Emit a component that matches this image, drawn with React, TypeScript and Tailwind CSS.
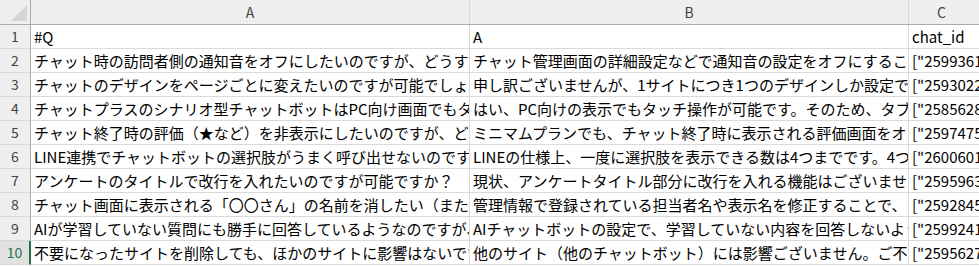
import React from "react";

const rows = [
    ["#Q", "A", "chat_id"],
    ["チャット時の訪問者側の通知音をオフにしたいのですが、どうすればよいですか？", "チャット管理画面の詳細設定などで通知音の設定をオフにすることで対応可能です。", "[\"2599361\"]"],
    ["チャットのデザインをページごとに変えたいのですが可能でしょうか？", "申し訳ございませんが、1サイトにつき1つのデザインしか設定できません。", "[\"2593022\"]"],
    ["チャットプラスのシナリオ型チャットボットはPC向け画面でもタッチ操作できますか？", "はい、PC向けの表示でもタッチ操作が可能です。そのため、タブレットでもご利用いただけます。", "[\"2585628\"]"],
    ["チャット終了時の評価（★など）を非表示にしたいのですが、どうすればよいですか？", "ミニマムプランでも、チャット終了時に表示される評価画面をオフにできます。", "[\"2597475\"]"],
    ["LINE連携でチャットボットの選択肢がうまく呼び出せないのですが", "LINEの仕様上、一度に選択肢を表示できる数は4つまでです。4つ以上の場合は分割してください。", "[\"2600601\"]"],
    ["アンケートのタイトルで改行を入れたいのですが可能ですか？", "現状、アンケートタイトル部分に改行を入れる機能はございません。", "[\"2595963\"]"],
    ["チャット画面に表示される「〇〇さん」の名前を消したい（または変更したい）", "管理情報で登録されている担当者名や表示名を修正することで、", "[\"2592845\"]"],
    ["AIが学習していない質問にも勝手に回答しているようなのですが、", "AIチャットボットの設定で、学習していない内容を回答しないように設定できます。", "[\"2599241\"]"],
    ["不要になったサイトを削除しても、ほかのサイトに影響はないですか？", "他のサイト（他のチャットボット）には影響ございません。ご不明点はお問い合わせください。", "[\"2595627\"]"],
];

const font = { fontFamily: "'Noto Sans CJK JP', 'Noto Sans', sans-serif" };

// sheet is wider than the window, the outer box clips column C like Excel does
const App = () => {
    return (
        <div className="w-[979px] h-[266px] overflow-hidden bg-white text-black" style={font}>
            <div className="w-[1070px]">
                {/* column headers */}
                <div className="grid grid-cols-[31px_439px_439px_161px] h-[25px] bg-[#efefef] border-b border-[#ababab] text-[14px] text-[#444]">
                    <div className="relative border-r border-[#ababab]">
                        <svg className="absolute right-[3px] bottom-[3px]" width="16" height="16" viewBox="0 0 16 16">
                            <polygon points="16,0 16,16 0,16" fill="#d6d6d6" />
                        </svg>
                    </div>
                    <div className="flex items-center justify-center border-r border-[#d9d9d9]">A</div>
                    <div className="flex items-center justify-center border-r border-[#d9d9d9]">B</div>
                    <div className="flex items-center pl-[28px] border-r border-[#d9d9d9]">C</div>
                </div>
                {rows.map((r, i) => {
                    const selected = i === 9;
                    return (
                        <div key={i} className="grid grid-cols-[31px_439px_439px_161px] h-[24px]">
                            <div
                                className={
                                    selected
                                        ? "flex items-center justify-center bg-[#e1e1e1] text-[#217346] text-[14px] border-b border-[#d9d9d9] border-r-2 border-r-[#217346]"
                                        : "flex items-center justify-center bg-[#efefef] text-[#444] text-[14px] border-b border-[#d9d9d9] border-r border-r-[#ababab]"
                                }
                            >
                                {i + 1}
                            </div>
                            {r.map((c, j) => (
                                <div
                                    key={j}
                                    className="flex items-center pl-[3px] overflow-hidden whitespace-nowrap text-[15px] leading-none border-b border-r border-[#dadada]"
                                >
                                    {c}
                                </div>
                            ))}
                        </div>
                    );
                })}
            </div>
        </div>
    );
};

export default App;
